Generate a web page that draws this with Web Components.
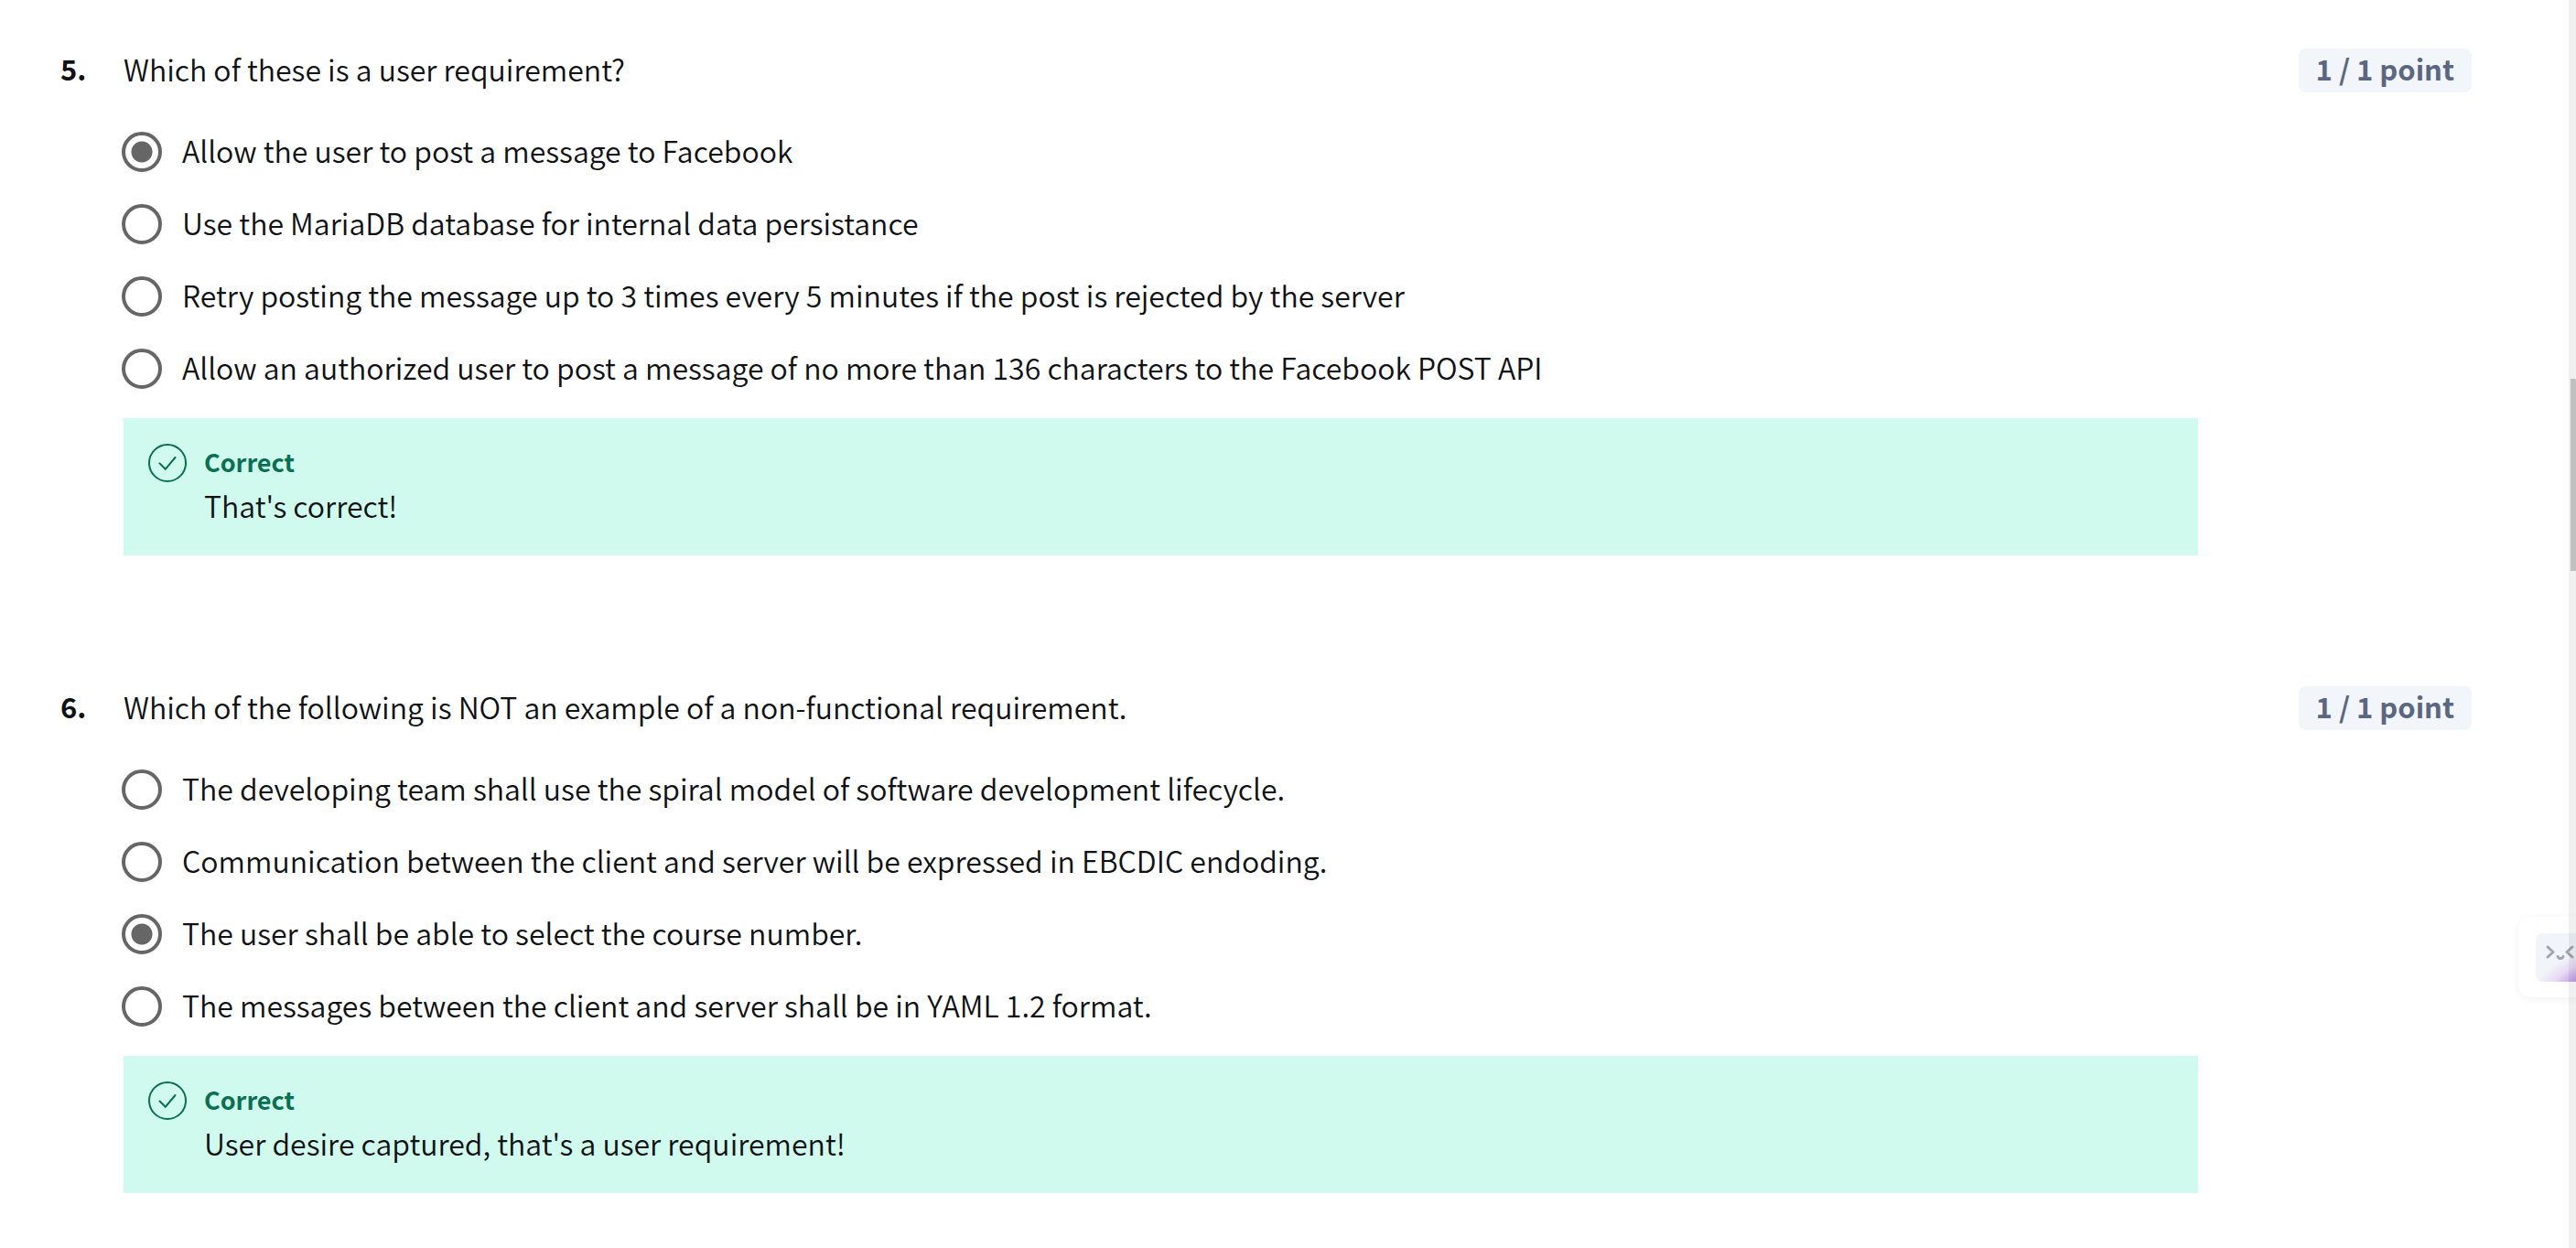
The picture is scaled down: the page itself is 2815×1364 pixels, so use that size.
<!DOCTYPE html>
<html lang="en">
<head>
<meta charset="utf-8">
<title>Quiz</title>
<style>
  body {
    margin: 0;
    background: #fff;
    color: #0f1114;
    font: 350 32px/44px "Noto Sans CJK SC", "Noto Sans", sans-serif;
    overflow: hidden;
  }
</style>
</head>
<body>
<quiz-page>
  <quiz-question number="5.">
    <span slot="prompt">Which of these is a user requirement?</span>
    <point-badge slot="points">1 / 1 point</point-badge>
    <quiz-option checked>Allow the user to post a message to Facebook</quiz-option>
    <quiz-option>Use the MariaDB database for internal data persistance</quiz-option>
    <quiz-option>Retry posting the message up to 3 times every 5 minutes if the post is rejected by the server</quiz-option>
    <quiz-option>Allow an authorized user to post a message of no more than 136 characters to the Facebook POST API</quiz-option>
    <quiz-feedback slot="feedback"><span slot="title">Correct</span>That's correct!</quiz-feedback>
  </quiz-question>
  <quiz-question number="6.">
    <span slot="prompt">Which of the following is NOT an example of a non-functional requirement.</span>
    <point-badge slot="points">1 / 1 point</point-badge>
    <quiz-option>The developing team shall use the spiral model of software development lifecycle.</quiz-option>
    <quiz-option>Communication between the client and server will be expressed in EBCDIC endoding.</quiz-option>
    <quiz-option checked>The user shall be able to select the course number.</quiz-option>
    <quiz-option>The messages between the client and server shall be in YAML 1.2 format.</quiz-option>
    <quiz-feedback slot="feedback"><span slot="title">Correct</span>User desire captured, that's a user requirement!</quiz-feedback>
  </quiz-question>
</quiz-page>
<helper-tab></helper-tab>
<scroll-rail></scroll-rail>

<script>
class ShadowElement extends HTMLElement {
  constructor() {
    super();
    this.attachShadow({ mode: "open" }).innerHTML = this.constructor.markup;
  }
}

customElements.define("quiz-page", class extends ShadowElement {
  static markup = `
    <style>
      :host { display: block; }
      main { display: flex; flex-direction: column; gap: 143px; padding: 53px 114px 61px 66px; }
    </style>
    <main><slot></slot></main>`;
});

customElements.define("quiz-question", class extends ShadowElement {
  static markup = `
    <style>
      :host { display: block; }
      section { display: grid; grid-template-columns: 69px minmax(0, 1fr) 299px; }
      .number { font-weight: 700; font-size: 31px; }
      .prompt { padding-bottom: 4px; }
      .points { justify-self: end; }
      .options { grid-column: 2; display: flex; flex-direction: column; gap: 31px; margin: 41px 0 30px; }
      .feedback { grid-column: 2; }
    </style>
    <section>
      <div class="number"></div>
      <div class="prompt" id="prompt"><slot name="prompt"></slot></div>
      <div class="points"><slot name="points"></slot></div>
      <div class="options" role="radiogroup" aria-labelledby="prompt"><slot></slot></div>
      <div class="feedback"><slot name="feedback"></slot></div>
    </section>`;
  connectedCallback() {
    this.shadowRoot.querySelector(".number").textContent = this.getAttribute("number");
    this.addEventListener("option-picked", (event) => {
      for (const option of this.querySelectorAll("quiz-option")) {
        option.checked = option === event.target;
      }
    });
  }
});

customElements.define("quiz-option", class extends ShadowElement {
  static markup = `
    <style>
      :host { display: block; }
      label { display: flex; align-items: center; gap: 22px; cursor: pointer; }
      input {
        appearance: none; flex: none; box-sizing: border-box;
        width: 44px; height: 44px; margin: 0 0 0 -2px;
        border: 4px solid #666; border-radius: 50%; background: #fff;
      }
      input:checked { background: radial-gradient(circle, #666 0 11px, #fff 12px); }
      .text { padding-bottom: 4px; }
    </style>
    <label for="choice"><input type="radio" id="choice"><span class="text"><slot></slot></span></label>`;
  set checked(value) { this.shadowRoot.querySelector("input").checked = value; }
  connectedCallback() {
    this.checked = this.hasAttribute("checked");
    this.shadowRoot.querySelector("input").addEventListener("change", () => {
      this.dispatchEvent(new CustomEvent("option-picked", { bubbles: true }));
    });
  }
});

customElements.define("point-badge", class extends ShadowElement {
  static markup = `
    <style>
      :host {
        display: block; padding: 0 19px 4px; border-radius: 8px;
        background: #f2f5fa; color: #5b6780; font-weight: 700; font-size: 31px; white-space: nowrap;
      }
    </style>
    <slot></slot>`;
});

customElements.define("quiz-feedback", class extends ShadowElement {
  static markup = `
    <style>
      :host { display: block; background: #d0faed; }
      .box { display: flex; gap: 19px; padding: 28px 27px 33px; }
      svg { flex: none; width: 42px; height: 42px; fill: none; stroke: #087051; stroke-width: 2; }
      .title { margin-bottom: 5px; color: #087051; font-weight: 700; font-size: 27px; line-height: 40px; }
    </style>
    <div class="box">
      <svg viewBox="0 0 42 42" aria-hidden="true">
        <circle cx="21" cy="21" r="20"/>
        <path d="M12.5 21.5l6.3 6.2L29.5 15" stroke-linecap="round"/>
      </svg>
      <div>
        <div class="title"><slot name="title"></slot></div>
        <div><slot></slot></div>
      </div>
    </div>`;
});

customElements.define("helper-tab", class extends ShadowElement {
  static markup = `
    <style>
      :host { display: block; position: fixed; right: 0; top: 1002px; }
      button {
        display: block; box-sizing: border-box; width: 63px; height: 88px; padding: 18px 0 17px 19px;
        border: 0; border-radius: 14px 0 0 14px; background: #fff;
        box-shadow: 0 2px 8px rgba(0, 0, 0, .06);
      }
      svg { display: block; width: 44px; height: 53px; }
    </style>
    <button type="button" aria-label="Open helper">
      <svg viewBox="0 0 44 53">
        <defs>
          <radialGradient id="glow" gradientUnits="userSpaceOnUse" cx="0" cy="0" r="1" gradientTransform="translate(54 56) rotate(-24) scale(64 36)">
            <stop offset="0" stop-color="#a777e0"/>
            <stop offset=".3" stop-color="#c8a5ea"/>
            <stop offset=".65" stop-color="#e8d9f5"/>
            <stop offset="1" stop-color="#f1f5f9"/>
          </radialGradient>
        </defs>
        <path d="M44 0H7a7 7 0 0 0-7 7v39a7 7 0 0 0 7 7h37z" fill="url(#glow)"/>
        <g fill="none" stroke="#a1a5af" stroke-width="3" stroke-linecap="round" stroke-linejoin="round">
          <path d="M13 15l6 5.500-6 5.500M40 15l-6 5.500 6 5.500"/>
          <path d="M24 25.500c1 2.600 5 2.600 6 0"/>
        </g>
      </svg>
    </button>`;
});

customElements.define("scroll-rail", class extends ShadowElement {
  static markup = `
    <style>
      :host {
        display: block; position: fixed; top: 0; right: 0; bottom: 0; width: 8px;
        box-sizing: border-box; padding: 414px 0 0 2px; background: rgba(0, 0, 0, .06);
      }
      .thumb { height: 210px; background: #c1c1c1; }
    </style>
    <div class="thumb"></div>`;
});
</script>
</body>
</html>
